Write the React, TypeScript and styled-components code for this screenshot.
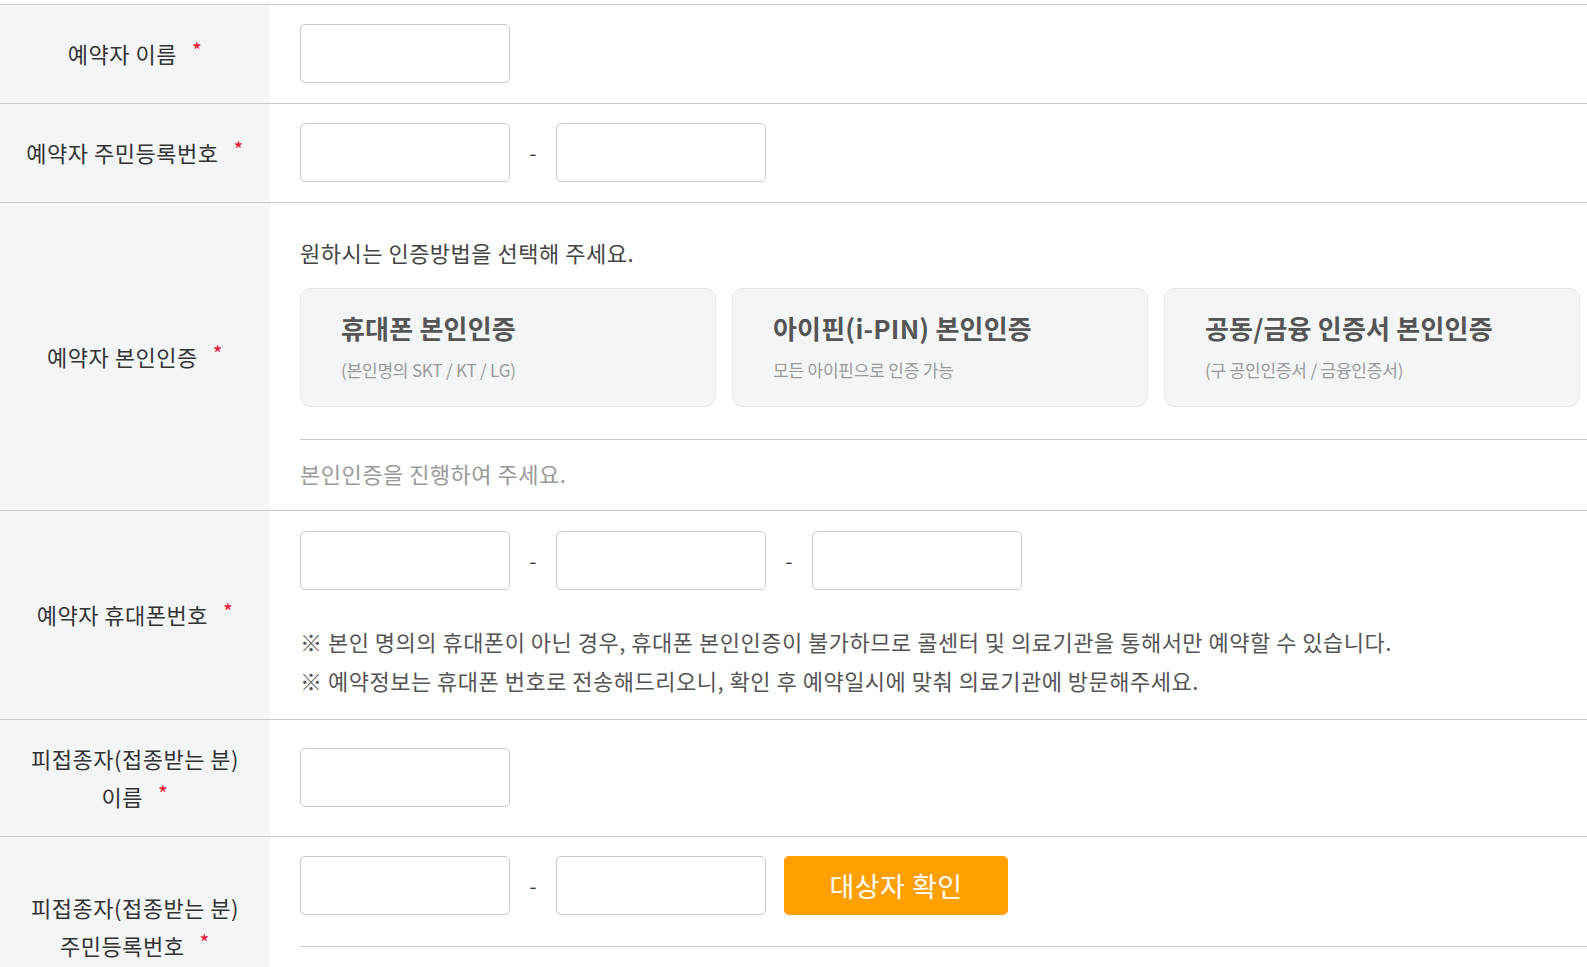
import styled, { createGlobalStyle } from "styled-components";

const GlobalStyle = createGlobalStyle`
  body {
    margin: 0;
    background: #fff;
    font-family: "Noto Sans CJK KR", "Noto Sans", sans-serif;
    color: #333;
  }
  * { box-sizing: border-box; }
`;

const Page = styled.div`
  padding-top: 4px;
`;

const Table = styled.div`
  border-top: 1px solid #c9c9ce;
`;

const Row = styled.div`
  display: grid;
  grid-template-columns: 270px 1fr;
  border-bottom: 1px solid #c9c9ce;
`;

const Label = styled.div`
  background: #f4f5f7;
  display: flex;
  align-items: center;
  justify-content: center;
  text-align: center;
  padding: 19px 6px 21px;
  font-size: 22px;
  line-height: 38px;
  letter-spacing: 0.5px;
  color: #333;
`;

const Required = styled.span`
  color: #e8112d;
  font-size: 21px;
  line-height: 0;
  margin-left: 15px;
  position: relative;
  top: -4px;
`;

const Cell = styled.div<{ $top?: number; $bottom?: number }>`
  display: flex;
  flex-direction: column;
  justify-content: center;
  padding: ${(p) => p.$top ?? 19}px 0 ${(p) => p.$bottom ?? 20}px 30px;
`;

const Fields = styled.div`
  display: flex;
  align-items: center;
`;

const Input = styled.input`
  width: 210px;
  height: 59px;
  border: 1px solid #c9c9ce;
  border-radius: 5px;
  background: #fff;
  font-size: 18px;
  padding: 0 12px;
  outline: none;
`;

const Dash = styled.span`
  width: 46px;
  text-align: center;
  font-size: 20px;
  color: #333;
`;

const ConfirmButton = styled.button`
  margin-left: 18px;
  width: 224px;
  height: 59px;
  border: none;
  border-radius: 5px;
  background: #ff9f00;
  color: #fff;
  font-family: inherit;
  font-size: 27px;
  letter-spacing: 0.5px;
  cursor: pointer;
`;

const Heading = styled.p`
  margin: 0;
  font-size: 22px;
  line-height: 30px;
  letter-spacing: 0.5px;
  color: #444;
`;

const Cards = styled.div`
  display: flex;
  gap: 16px;
  margin-top: 21px;
  padding-right: 7px;
`;

const Card = styled.button`
  flex: 1;
  height: 119px;
  text-align: left;
  padding: 22px 40px 0;
  background: #f4f5f7;
  border: 1px solid #e5e8ee;
  border-radius: 11px;
  font-family: inherit;
  cursor: pointer;
  display: flex;
  flex-direction: column;
  justify-content: flex-start;
`;

const CardTitle = styled.strong`
  font-size: 26px;
  line-height: 34px;
  letter-spacing: 0.2px;
  font-weight: 700;
  color: #555;
`;

const CardSub = styled.span`
  margin-top: 11px;
  font-size: 17px;
  line-height: 28px;
  letter-spacing: -0.2px;
  color: #9a9a9a;
`;

const Divider = styled.hr<{ $gap: number }>`
  margin: ${(p) => p.$gap}px 0 0;
  border: none;
  border-top: 1px solid #c9c9ce;
`;

const Status = styled.p`
  margin: 0;
  min-height: 70px;
  padding: 18px 0 22px;
  font-size: 22px;
  line-height: 30px;
  letter-spacing: 0.5px;
  color: #9a9a9a;
`;

const Notes = styled.ul`
  list-style: none;
  margin: 32px 0 0;
  padding: 0;
`;

const Note = styled.li`
  font-size: 22px;
  line-height: 39px;
  letter-spacing: 0.5px;
  color: #555;
`;

const authMethods = [
  { title: "휴대폰 본인인증", sub: "(본인명의 SKT / KT / LG)" },
  { title: "아이핀(i-PIN) 본인인증", sub: "모든 아이핀으로 인증 가능" },
  { title: "공동/금융 인증서 본인인증", sub: "(구 공인인증서 / 금융인증서)" },
];

export default function App() {
  return (
    <Page>
      <GlobalStyle />
      <Table>
        <Row>
          <Label>
            <span>
              예약자 이름<Required>*</Required>
            </span>
          </Label>
          <Cell>
            <Fields>
              <Input type="text" />
            </Fields>
          </Cell>
        </Row>

        <Row>
          <Label>
            <span>
              예약자 주민등록번호<Required>*</Required>
            </span>
          </Label>
          <Cell>
            <Fields>
              <Input type="text" />
              <Dash>-</Dash>
              <Input type="password" />
            </Fields>
          </Cell>
        </Row>

        <Row>
          <Label>
            <span>
              예약자 본인인증<Required>*</Required>
            </span>
          </Label>
          <Cell $top={34} $bottom={0}>
            <Heading>원하시는 인증방법을 선택해 주세요.</Heading>
            <Cards>
              {authMethods.map((m) => (
                <Card key={m.title} type="button">
                  <CardTitle>{m.title}</CardTitle>
                  <CardSub>{m.sub}</CardSub>
                </Card>
              ))}
            </Cards>
            <Divider $gap={32} />
            <Status>본인인증을 진행하여 주세요.</Status>
          </Cell>
        </Row>

        <Row>
          <Label>
            <span>
              예약자 휴대폰번호<Required>*</Required>
            </span>
          </Label>
          <Cell $top={20} $bottom={19}>
            <Fields>
              <Input type="text" />
              <Dash>-</Dash>
              <Input type="text" />
              <Dash>-</Dash>
              <Input type="text" />
            </Fields>
            <Notes>
              <Note>※ 본인 명의의 휴대폰이 아닌 경우, 휴대폰 본인인증이 불가하므로 콜센터 및 의료기관을 통해서만 예약할 수 있습니다.</Note>
              <Note>※ 예약정보는 휴대폰 번호로 전송해드리오니, 확인 후 예약일시에 맞춰 의료기관에 방문해주세요.</Note>
            </Notes>
          </Cell>
        </Row>

        <Row>
          <Label>
            <span>
              피접종자(접종받는 분)
              <br />
              이름<Required>*</Required>
            </span>
          </Label>
          <Cell>
            <Fields>
              <Input type="text" />
            </Fields>
          </Cell>
        </Row>

        <Row>
          <Label>
            <span>
              피접종자(접종받는 분)
              <br />
              주민등록번호<Required>*</Required>
            </span>
          </Label>
          <Cell $bottom={0}>
            <Fields>
              <Input type="text" />
              <Dash>-</Dash>
              <Input type="password" />
              <ConfirmButton type="button">대상자 확인</ConfirmButton>
            </Fields>
            <Divider $gap={31} />
            <Status />
          </Cell>
        </Row>
      </Table>
    </Page>
  );
}
